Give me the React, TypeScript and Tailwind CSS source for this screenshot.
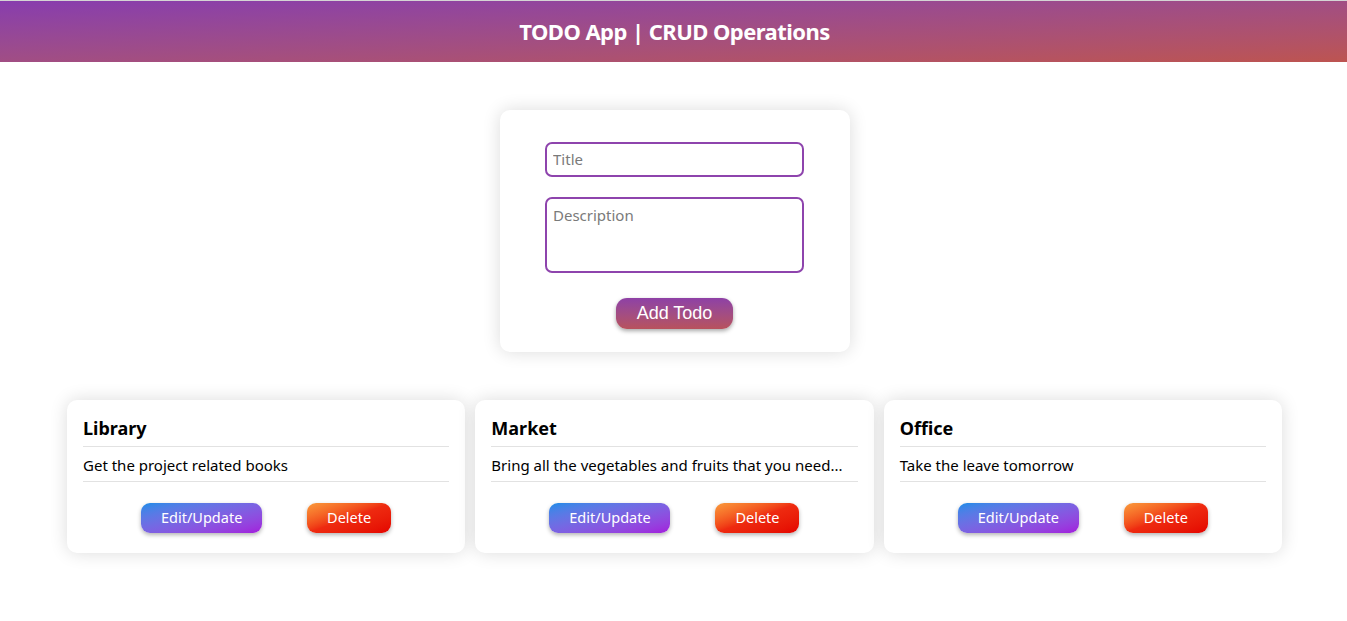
import { useState } from "react";

const todos = [
  { id: 1, title: "Library", description: "Get the project related books" },
  { id: 2, title: "Market", description: "Bring all the vegetables and fruits that you need..." },
  { id: 3, title: "Office", description: "Take the leave tomorrow" }
];

export default function App() {
  const [title, setTitle] = useState("");
  const [description, setDescription] = useState("");

  return (
    <div className="min-h-screen bg-white font-['Noto_Sans',sans-serif] text-black">
      <header className="flex h-[62px] items-center justify-center border-t border-[#d4d4d4] bg-gradient-to-br from-[#883cae] to-[#bd5450]">
        <h1 className="pl-[2px] text-[22px] font-bold tracking-tight text-white">TODO App | CRUD Operations</h1>
      </header>

      <div className="pl-[2px]">
        <section className="mt-12 flex justify-center">
          <form
            onSubmit={(e) => e.preventDefault()}
            className="flex h-[242px] w-[350px] flex-col items-center rounded-[10px] bg-white pt-8 shadow-[0_0_18px_rgba(0,0,0,0.14)]"
          >
            <input
              value={title}
              onChange={(e) => setTitle(e.target.value)}
              placeholder="Title"
              className="h-[35px] w-[259px] rounded-[7px] border-2 border-[#8e44ad] px-[6px] pb-[1px] text-[15px] outline-none placeholder:text-[#7a7a7a]"
            />
            <textarea
              value={description}
              onChange={(e) => setDescription(e.target.value)}
              placeholder="Description"
              className="mt-5 h-[76px] w-[259px] resize-none rounded-[7px] border-2 border-[#8e44ad] px-[6px] pt-[5px] text-[15px] outline-none placeholder:text-[#7a7a7a]"
            />
            <button
              type="submit"
              className="mt-[25px] h-[31px] w-[117px] rounded-[11px] bg-gradient-to-b from-[#8e40a6] to-[#b8525c] font-['Liberation_Sans',sans-serif] text-[18px] text-white shadow-[0_2px_4px_rgba(0,0,0,0.35)]"
            >
              Add Todo
            </button>
          </form>
        </section>

        <section className="mx-auto mt-12 grid w-[1215px] grid-cols-3 gap-[10px]">
          {todos.map((todo) => (
            <article key={todo.id} className="h-[153px] rounded-[10px] bg-white px-4 pt-[15px] shadow-[0_0_18px_rgba(0,0,0,0.14)]">
              <h2 className="border-b border-[#e2e2e2] pb-[5px] text-[18px] font-bold leading-[26px]">{todo.title}</h2>
              <p className="border-b border-[#e2e2e2] pt-[8px] pb-[6px] text-[15px] leading-[20px]">{todo.description}</p>
              <div className="mt-[21px] flex justify-center gap-[45px] text-[14.5px] text-white">
                <button className="h-[30px] w-[121px] rounded-[9px] bg-gradient-to-br from-[#0c8ce8] to-[#a218dc] shadow-[0_2px_4px_rgba(0,0,0,0.3)]">
                  Edit/Update
                </button>
                <button className="h-[30px] w-[84px] rounded-[9px] bg-gradient-to-br from-[#f99a3c] via-[#ee2a10] to-[#e40000] shadow-[0_2px_4px_rgba(0,0,0,0.3)]">
                  Delete
                </button>
              </div>
            </article>
          ))}
        </section>
      </div>
    </div>
  );
}
